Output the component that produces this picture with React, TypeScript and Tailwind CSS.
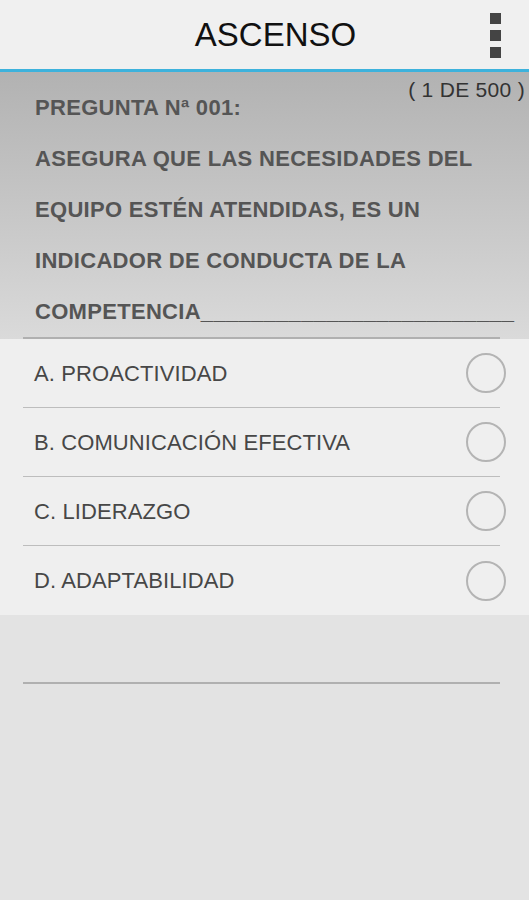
import React from "react";

const options = [
  "A. PROACTIVIDAD",
  "B. COMUNICACIÓN EFECTIVA",
  "C. LIDERAZGO",
  "D. ADAPTABILIDAD",
];

export default function App() {
  return (
    <div
      className="w-[529px] h-[900px] bg-[#e3e3e3] flex flex-col overflow-hidden"
      style={{ fontFamily: '"Liberation Sans", Arial, sans-serif' }}
    >
      {/* Header */}
      <div className="h-[69px] bg-[#f0f0f0] relative flex items-center justify-center">
        <span className="text-[33px] text-[#111] leading-none pl-[22px]">ASCENSO</span>
        <div className="absolute right-[28px] top-[13px] flex flex-col gap-[6px]">
          <div className="w-[11px] h-[11px] bg-[#444]" />
          <div className="w-[11px] h-[11px] bg-[#444]" />
          <div className="w-[11px] h-[11px] bg-[#444]" />
        </div>
      </div>
      <div className="h-[3px] bg-[#3db2dc]" />

      {/* Question */}
      <div className="relative bg-gradient-to-b from-[#b2b2b2] to-[#dadada] pt-[10px] px-[23px]">
        <div className="absolute right-[4px] top-[7px] text-[21px] tracking-[0.3px] text-[#333] leading-none">( 1 DE 500 )</div>
        <div className="pl-[12px] text-[22px] tracking-[0.3px] font-bold text-[#555] leading-[51px] whitespace-nowrap">
          <div>PREGUNTA Nª 001:</div>
          <div>ASEGURA QUE LAS NECESIDADES DEL</div>
          <div>EQUIPO ESTÉN ATENDIDAS, ES UN</div>
          <div>INDICADOR DE CONDUCTA DE LA</div>
          <div>COMPETENCIA_________________________</div>
        </div>
        <div className="h-[2px] bg-[#b0b0b0] w-[477px]" />
      </div>

      {/* Options */}
      <div className="bg-[#efefef] px-[23px]">
        {options.map((o, i) => (
          <div
            key={o}
            className={
              "h-[69px] flex items-center justify-between pl-[11px] " +
              (i < options.length - 1 ? "border-b border-[#bdbdbd] w-[477px]" : "w-[477px]")
            }
          >
            <span className="text-[22px] tracking-[0.1px] text-[#474747]">{o}</span>
            <div className="w-[40px] h-[40px] rounded-full border-[2px] border-[#b4b4b4] -mr-[6px]" />
          </div>
        ))}
      </div>

      {/* Bottom */}
      <div className="px-[23px] pt-[67px]">
        <div className="h-[2px] bg-[#b0b0b0] w-[477px]" />
      </div>
    </div>
  );
}
